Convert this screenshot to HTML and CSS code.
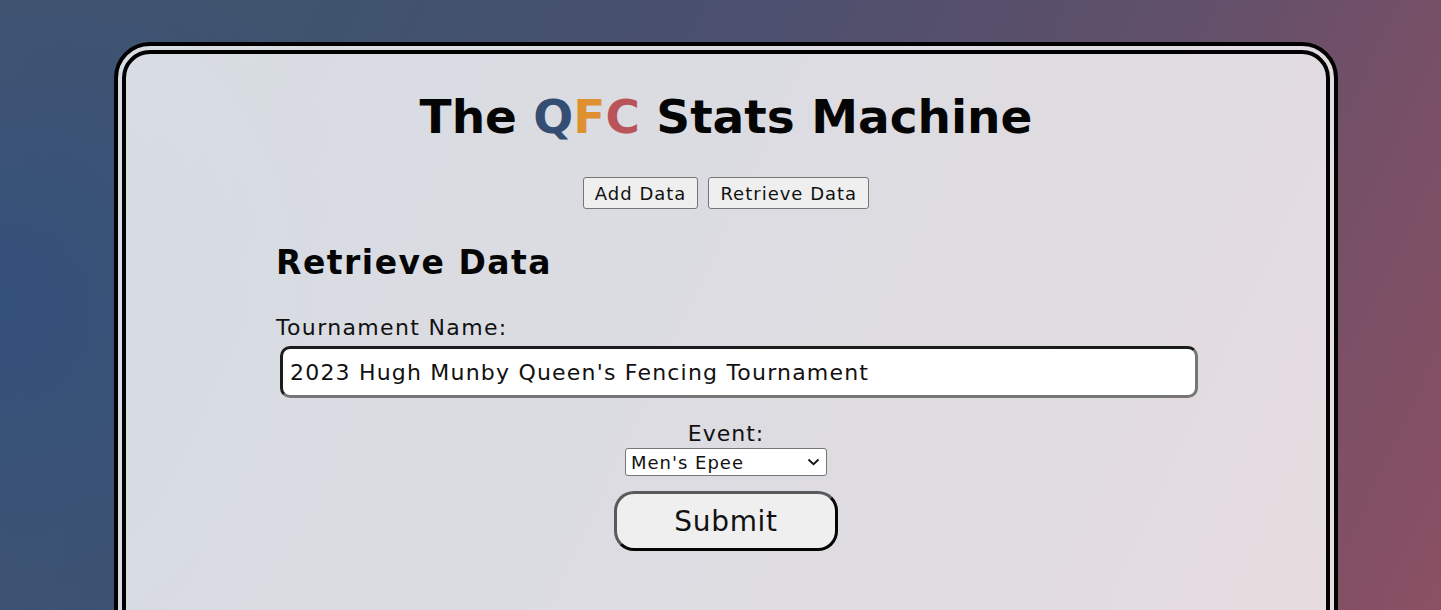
FILE: index.html
```html
<!DOCTYPE html>
<html lang="en">
<head>
<meta charset="utf-8">
<title>The QFC Stats Machine</title>
<link rel="stylesheet" href="styles.css">
</head>
<body>
<main class="card">
  <h1 class="title">The <span class="q">Q</span><span class="f">F</span><span class="c">C</span> Stats Machine</h1>
  <nav class="tabs">
    <button class="tab" type="button">Add Data</button>
    <button class="tab" type="button">Retrieve Data</button>
  </nav>
  <section class="form">
    <h2 class="form-title">Retrieve Data</h2>
    <label class="label" for="tname">Tournament Name:</label>
    <input class="text-input" id="tname" type="text" value="2023 Hugh Munby Queen's Fencing Tournament">
    <div class="event">
      <label class="label event-label" for="event">Event:</label>
      <div class="select-wrap">
        <select class="select" id="event">
          <option>Men's Epee</option>
          <option>Women's Epee</option>
          <option>Men's Foil</option>
          <option>Women's Foil</option>
          <option>Men's Sabre</option>
          <option>Women's Sabre</option>
        </select>
        <svg class="chevron" width="13" height="8" viewBox="0 0 13 8" aria-hidden="true"><path d="M1.5 1.5 L6.5 6.2 L11.5 1.5" fill="none" stroke="#111" stroke-width="1.8"/></svg>
      </div>
      <button class="submit" type="button">Submit</button>
    </div>
  </section>
</main>
</body>
</html>
```
FILE: styles.css
```css
html, body {
  margin: 0;
  padding: 0;
}
body {
  height: 610px;
  overflow: hidden;
  font-family: "DejaVu Sans", Verdana, sans-serif;
  color: #111;
  background:
    radial-gradient(ellipse 380px 420px at 0% 50%, rgba(50, 80, 124, 0.9), rgba(50, 80, 124, 0) 100%),
    linear-gradient(115deg, #46566f 0%, #3f536f 20%, #4c506e 45%, #62506a 70%, #7c5066 88%, #8b5063 100%);
}
.card {
  box-sizing: border-box;
  width: 1224px;
  min-height: 700px;
  margin: 42px 0 0 114px;
  border: 12px double #000;
  border-radius: 36px;
  background: rgba(255, 255, 255, 0.8);
  display: flex;
  flex-direction: column;
  align-items: center;
}
.title {
  margin: 33px 0 0;
  font-size: 47px;
  font-weight: bold;
  line-height: 60px;
  color: #050505;
}
.q { color: #344e73; }
.f { color: #df9132; }
.c { color: #b9545a; }
.tabs {
  display: flex;
  gap: 10px;
  margin-top: 30px;
}
.tab {
  font-family: "DejaVu Sans", Verdana, sans-serif;
  font-size: 18px;
  letter-spacing: 1px;
  height: 32px;
  padding: 0 11px 0 11px;
  background: #efefef;
  border: 1px solid #767676;
  border-radius: 3px;
  color: #111;
}
.form {
  width: 900px;
  display: flex;
  flex-direction: column;
  align-items: flex-start;
}
.form-title {
  margin: 32px 0 0;
  font-size: 33px;
  letter-spacing: 1.5px;
  line-height: 44px;
  font-weight: bold;
  color: #050505;
}
.label {
  font-size: 22px;
  line-height: 26px;
  letter-spacing: 1.35px;
  color: #111;
}
.form > .label {
  margin-top: 30px;
}
.text-input {
  box-sizing: border-box;
  width: 918px;
  height: 52px;
  margin: 5px 0 0 4px;
  padding: 0 7px;
  font-family: "DejaVu Sans", Verdana, sans-serif;
  font-size: 22px;
  letter-spacing: 1.2px;
  color: #111;
  background: #fff;
  border: 3px solid;
  border-color: #1c1c1c #767676 #767676 #1c1c1c;
  border-radius: 10px;
  outline: none;
}
.event {
  align-self: stretch;
  display: flex;
  flex-direction: column;
  align-items: center;
  margin-top: 23px;
}
.event-label {
  letter-spacing: 1px;
}
.select-wrap {
  position: relative;
  margin-top: 1px;
  display: flex;
}
.select {
  -webkit-appearance: none;
  appearance: none;
  width: 202px;
  height: 28px;
  font-family: "DejaVu Sans", Verdana, sans-serif;
  font-size: 18px;
  letter-spacing: 1px;
  color: #111;
  background: #fff;
  border: 1px solid #767676;
  border-radius: 3px;
  padding: 0 5px;
}
.chevron {
  position: absolute;
  right: 7px;
  top: 10px;
  pointer-events: none;
}
.submit {
  box-sizing: border-box;
  width: 224px;
  height: 60px;
  margin-top: 15px;
  font-family: "DejaVu Sans", Verdana, sans-serif;
  font-size: 28px;
  letter-spacing: 0.7px;
  color: #111;
  background: #efefef;
  border: 3px solid;
  border-color: #5a5a5a #050505 #050505 #5a5a5a;
  border-radius: 20px;
}
```
